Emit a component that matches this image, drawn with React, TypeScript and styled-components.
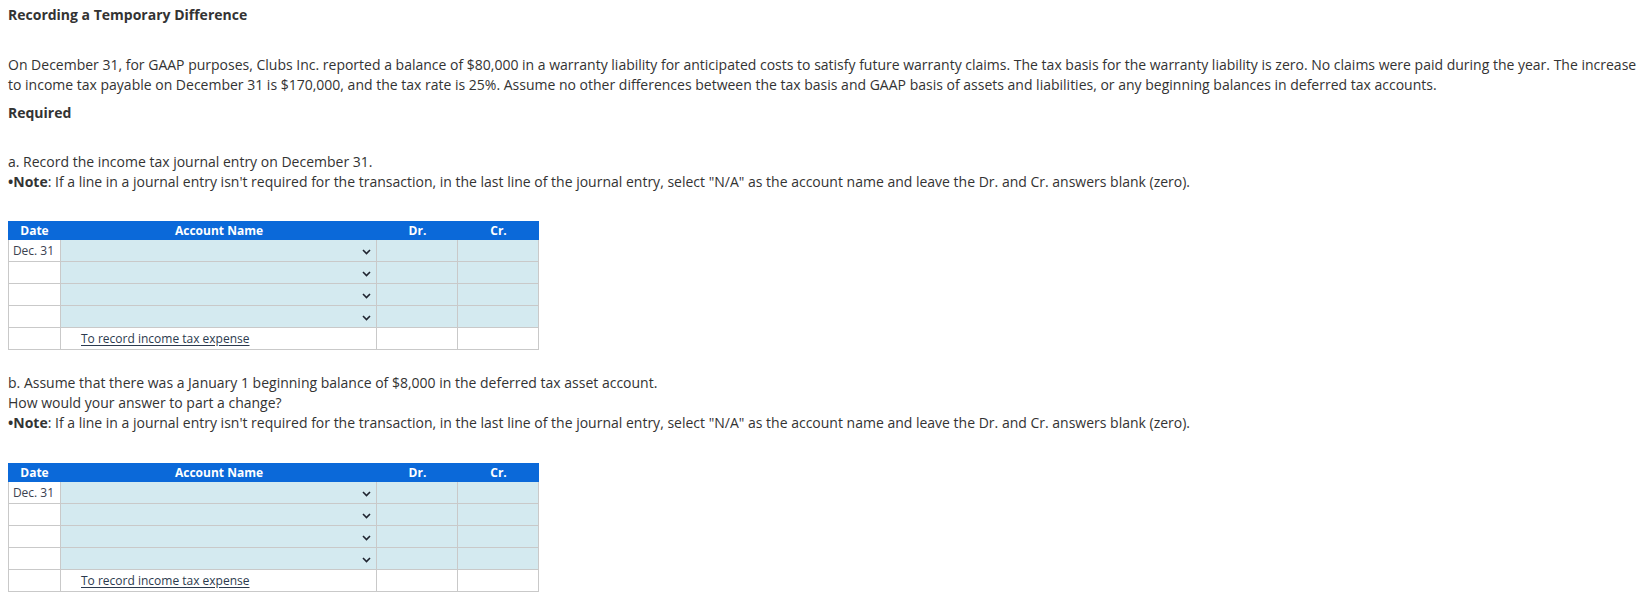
import React from "react";
import styled, { createGlobalStyle } from "styled-components";

const Global = createGlobalStyle`
  html, body { margin: 0; padding: 0; background: #ffffff; }
  body { font-family: "Open Sans", "Liberation Sans", sans-serif; color: #333333; }
`;

const Page = styled.div`
  padding: 5px 0 0 8px;
  display: flex;
  flex-direction: column;
`;

const Title = styled.div`
  font-size: 14px;
  line-height: 20px;
  font-weight: 700;
`;

const Para = styled.p<{ $mt: number }>`
  margin: ${(p) => p.$mt}px 0 0 0;
  font-size: 14px;
  line-height: 20px;
`;

const Strong = styled.span`
  font-weight: 700;
`;

const Table = styled.div<{ $mt: number }>`
  margin-top: ${(p) => p.$mt}px;
  width: 531px;
  display: flex;
  flex-direction: column;
`;

const cols = "52px 316px 81px 81px";

const HeadRow = styled.div`
  display: grid;
  grid-template-columns: 53px 316px 81px 81px;
  height: 19px;
  background: #0b69d9;
  color: #ffffff;
  font-size: 12px;
  font-weight: 700;
  line-height: 19px;
  text-align: center;
`;

const Row = styled.div`
  display: grid;
  grid-template-columns: ${cols};
  height: 22px;
  box-sizing: border-box;
  border-left: 1px solid #c9c9c9;
  border-bottom: 1px solid #c9c9c9;
`;

const Cell = styled.div<{ $input?: boolean }>`
  box-sizing: border-box;
  border-right: 1px solid #c9c9c9;
  background: ${(p) => (p.$input ? "#d4eaf0" : "#ffffff")};
  font-size: 12px;
  line-height: 21px;
  color: #3b4250;
`;

const DateCell = styled(Cell)`
  text-align: center;
  padding-right: 2px;
`;

const SelectCell = styled(Cell)`
  display: flex;
  justify-content: flex-end;
  align-items: center;
  padding: 3px 5px 0 0;
`;

const MemoCell = styled(Cell)`
  padding-left: 20px;
  color: #2c3a4e;
`;

const Memo = styled.span`
  text-decoration: underline;
  text-underline-offset: 2px;
`;

const Chevron = () => (
  <svg width="9" height="6" viewBox="0 0 9 6" aria-hidden="true">
    <path d="M1 1 L4.5 4.5 L8 1" fill="none" stroke="#1f2430" strokeWidth="1.6" />
  </svg>
);

const JournalTable: React.FC<{ mt: number }> = ({ mt }) => (
  <Table $mt={mt}>
    <HeadRow>
      <div>Date</div>
      <div>Account Name</div>
      <div>Dr.</div>
      <div>Cr.</div>
    </HeadRow>
    {[0, 1, 2, 3].map((i) => (
      <Row key={i}>
        <DateCell>{i === 0 ? "Dec. 31" : ""}</DateCell>
        <SelectCell $input>
          <Chevron />
        </SelectCell>
        <Cell $input />
        <Cell $input />
      </Row>
    ))}
    <Row>
      <DateCell />
      <MemoCell>
        <Memo>To record income tax expense</Memo>
      </MemoCell>
      <Cell />
      <Cell />
    </Row>
  </Table>
);

const NOTE =
  ': If a line in a journal entry isn\'t required for the transaction, in the last line of the journal entry, select "N/A" as the account name and leave the Dr. and Cr. answers blank (zero).';

export default function App() {
  return (
    <>
      <Global />
      <Page>
        <Title>Recording a Temporary Difference</Title>
        <Para $mt={30}>
          On December 31, for GAAP purposes, Clubs Inc. reported a balance of $80,000 in a warranty liability for
          anticipated costs to satisfy future warranty claims. The tax basis for the warranty liability is zero. No
          claims were paid during the year. The increase
          <br />
          to income tax payable on December 31 is $170,000, and the tax rate is 25%. Assume no other differences
          between the tax basis and GAAP basis of assets and liabilities, or any beginning balances in deferred tax
          accounts.
        </Para>
        <Para $mt={8}>
          <Strong>Required</Strong>
        </Para>
        <Para $mt={29}>
          a. Record the income tax journal entry on December 31.
          <br />
          <Strong>•Note</Strong>
          {NOTE}
        </Para>
        <JournalTable mt={29} />
        <Para $mt={23}>
          b. Assume that there was a January 1 beginning balance of $8,000 in the deferred tax asset account.
          <br />
          How would your answer to part a change?
          <br />
          <Strong>•Note</Strong>
          {NOTE}
        </Para>
        <JournalTable mt={30} />
      </Page>
    </>
  );
}
